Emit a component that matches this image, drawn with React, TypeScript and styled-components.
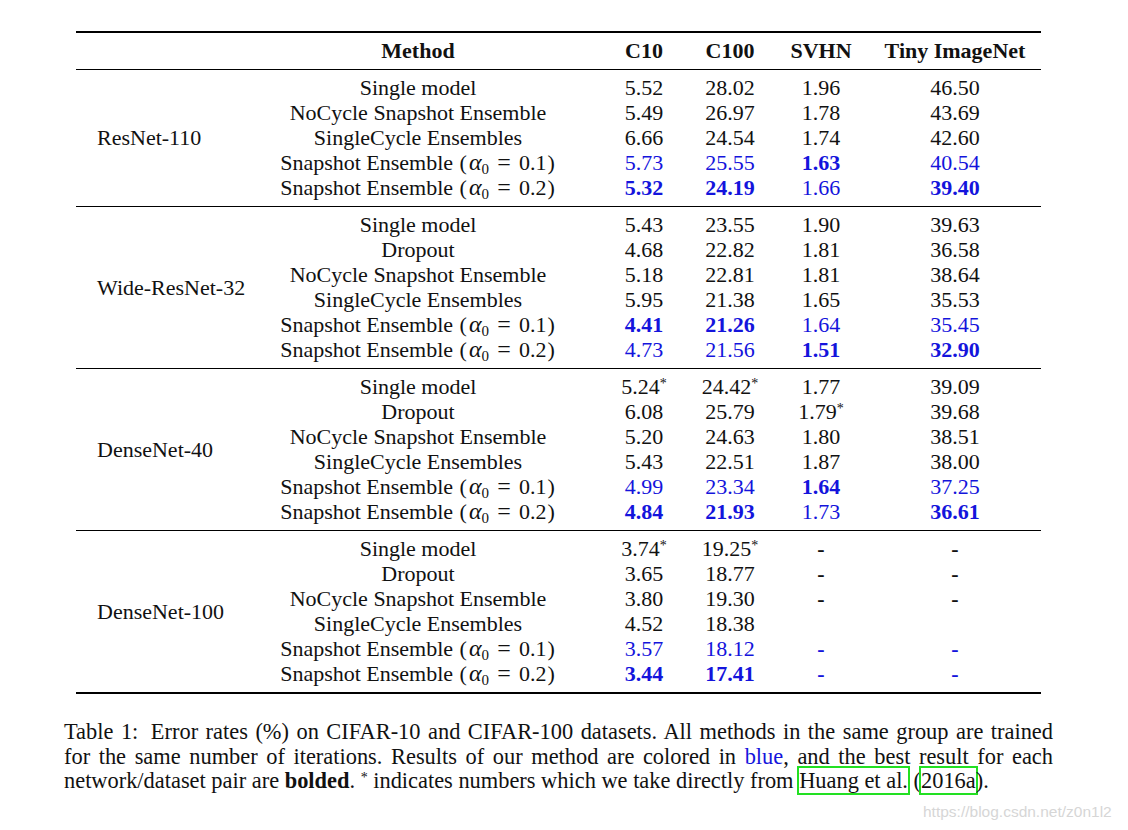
import React from 'react';
import styled, { createGlobalStyle } from 'styled-components';

const GlobalStyle = createGlobalStyle`
  html, body { margin: 0; padding: 0; background: #fff; }
  body {
    font-family: "Liberation Serif", "Times New Roman", serif;
    color: #111;
  }
`;

const Page = styled.div`
  position: relative;
  width: 1128px;
  height: 830px;
  padding-top: 31px;
  box-sizing: border-box;
  overflow: hidden;
`;

const Table = styled.div`
  margin-left: 76px;
  width: 965px;
  border-top: 2px solid #000;
  border-bottom: 2px solid #000;
  font-size: 22px;
  line-height: 25px;
`;

const Section = styled.div<{ $last?: boolean }>`
  display: flex;
  padding: 5px 0 6px;
  border-bottom: ${(p) => (p.$last ? 'none' : '1px solid #000')};
`;

const NetName = styled.div`
  width: 186px;
  flex-shrink: 0;
  box-sizing: border-box;
  padding-left: 21px;
  display: flex;
  align-items: center;
  white-space: nowrap;
`;

const RowList = styled.div`
  display: flex;
  flex-direction: column;
  flex: 1;
`;

const Row = styled.div`
  display: grid;
  grid-template-columns: 339px 86px 86px 96px 172px;
  height: 25px;
`;

const Cell = styled.div<{ $blue?: boolean; $bold?: boolean }>`
  text-align: center;
  white-space: nowrap;
  color: ${(p) => (p.$blue ? '#1414dc' : '#111')};
  font-weight: ${(p) => (p.$bold ? 700 : 400)};
`;

const MethodCell = styled(Cell)`
  padding-right: 27px;
`;

const Star = styled.sup`
  font-size: 14px;
  line-height: 0;
  vertical-align: 6px;
  font-weight: 400;
`;

const Alpha = styled.i`
  font-style: italic;
  font-size: 24px;
  margin-left: 1px;
`;

const Sub = styled.sub`
  font-size: 15px;
  line-height: 0;
  vertical-align: -4px;
`;

const Eq = styled.span`
  display: inline-block;
  width: 30px;
  text-align: center;
  font-size: 24px;
`;

const Paren = styled.span`
  display: inline-block;
  margin: 0 1px;
`;

const Caption = styled.div`
  margin: 26px 0 0 64px;
  width: 989px;
  font-size: 22.4px;
  line-height: 24.7px;
  color: #111;
`;

const CaptionLine = styled.span<{ $justify?: boolean }>`
  display: block;
  text-align: ${(p) => (p.$justify ? 'justify' : 'left')};
  text-align-last: ${(p) => (p.$justify ? 'justify' : 'left')};
`;

const Lead = styled.span`
  margin-right: 5px;
`;

const Blue = styled.span`
  color: #1414dc;
`;

const LinkBox = styled.span`
  border: 2px solid #22e022;
  margin: 0 -2px;
`;

const Watermark = styled.div`
  position: absolute;
  left: 923px;
  top: 803px;
  font-family: "Liberation Sans", Arial, sans-serif;
  font-size: 15.5px;
  color: #d6d6d6;
  white-space: nowrap;
`;

type RowData = { m: string; alpha?: string; vals: string[] };
type Group = { net: string; rows: RowData[] };

const groups: Group[] = [
  {
    net: 'ResNet-110',
    rows: [
      { m: 'Single model', vals: ['5.52', '28.02', '1.96', '46.50'] },
      { m: 'NoCycle Snapshot Ensemble', vals: ['5.49', '26.97', '1.78', '43.69'] },
      { m: 'SingleCycle Ensembles', vals: ['6.66', '24.54', '1.74', '42.60'] },
      { m: 'Snapshot Ensemble', alpha: '0.1', vals: ['5.73', '25.55', '**1.63', '40.54'] },
      { m: 'Snapshot Ensemble', alpha: '0.2', vals: ['**5.32', '**24.19', '1.66', '**39.40'] },
    ],
  },
  {
    net: 'Wide-ResNet-32',
    rows: [
      { m: 'Single model', vals: ['5.43', '23.55', '1.90', '39.63'] },
      { m: 'Dropout', vals: ['4.68', '22.82', '1.81', '36.58'] },
      { m: 'NoCycle Snapshot Ensemble', vals: ['5.18', '22.81', '1.81', '38.64'] },
      { m: 'SingleCycle Ensembles', vals: ['5.95', '21.38', '1.65', '35.53'] },
      { m: 'Snapshot Ensemble', alpha: '0.1', vals: ['**4.41', '**21.26', '1.64', '35.45'] },
      { m: 'Snapshot Ensemble', alpha: '0.2', vals: ['4.73', '21.56', '**1.51', '**32.90'] },
    ],
  },
  {
    net: 'DenseNet-40',
    rows: [
      { m: 'Single model', vals: ['5.24*', '24.42*', '1.77', '39.09'] },
      { m: 'Dropout', vals: ['6.08', '25.79', '1.79*', '39.68'] },
      { m: 'NoCycle Snapshot Ensemble', vals: ['5.20', '24.63', '1.80', '38.51'] },
      { m: 'SingleCycle Ensembles', vals: ['5.43', '22.51', '1.87', '38.00'] },
      { m: 'Snapshot Ensemble', alpha: '0.1', vals: ['4.99', '23.34', '**1.64', '37.25'] },
      { m: 'Snapshot Ensemble', alpha: '0.2', vals: ['**4.84', '**21.93', '1.73', '**36.61'] },
    ],
  },
  {
    net: 'DenseNet-100',
    rows: [
      { m: 'Single model', vals: ['3.74*', '19.25*', '-', '-'] },
      { m: 'Dropout', vals: ['3.65', '18.77', '-', '-'] },
      { m: 'NoCycle Snapshot Ensemble', vals: ['3.80', '19.30', '-', '-'] },
      { m: 'SingleCycle Ensembles', vals: ['4.52', '18.38', '', ''] },
      { m: 'Snapshot Ensemble', alpha: '0.1', vals: ['3.57', '18.12', '-', '-'] },
      { m: 'Snapshot Ensemble', alpha: '0.2', vals: ['**3.44', '**17.41', '-', '-'] },
    ],
  },
];

const headers = ['C10', 'C100', 'SVHN', 'Tiny ImageNet'];

function ValueCell({ raw, blue }: { raw: string; blue: boolean }) {
  let v = raw;
  const bold = v.startsWith('**');
  if (bold) v = v.slice(2);
  const star = v.endsWith('*');
  if (star) v = v.slice(0, -1);
  return (
    <Cell $blue={blue} $bold={bold || v === '-'}>
      {v}
      {star && <Star>*</Star>}
    </Cell>
  );
}

export default function App() {
  return (
    <>
      <GlobalStyle />
      <Page>
        <Table>
          <Section>
            <NetName />
            <RowList>
              <Row>
                <MethodCell $bold>Method</MethodCell>
                {headers.map((h) => (
                  <Cell key={h} $bold>
                    {h}
                  </Cell>
                ))}
              </Row>
            </RowList>
          </Section>
          {groups.map((g, gi) => (
            <Section key={g.net} $last={gi === groups.length - 1}>
              <NetName>{g.net}</NetName>
              <RowList>
                {g.rows.map((r, ri) => {
                  const blue = !!r.alpha;
                  return (
                    <Row key={ri}>
                      <MethodCell>
                        {r.m}
                        {r.alpha && (
                          <>
                            {' '}
                            <Paren>(</Paren>
                            <Alpha>α</Alpha>
                            <Sub>0</Sub>
                            <Eq>=</Eq>
                            {r.alpha}
                            <Paren>)</Paren>
                          </>
                        )}
                      </MethodCell>
                      {r.vals.map((v, vi) => (
                        <ValueCell key={vi} raw={v} blue={blue} />
                      ))}
                    </Row>
                  );
                })}
              </RowList>
            </Section>
          ))}
        </Table>
        <Caption>
          <CaptionLine $justify>
            <Lead>Table 1:</Lead> Error rates (%) on CIFAR-10 and CIFAR-100 datasets. All methods in the same group are
            trained
          </CaptionLine>
          <CaptionLine $justify>
            for the same number of iterations. Results of our method are colored in <Blue>blue</Blue>, and the best
            result for each
          </CaptionLine>
          <CaptionLine>
            network/dataset pair are <b>bolded</b>. <Star>*</Star> indicates numbers which we take directly from{' '}
            <LinkBox>Huang et al.</LinkBox> (<LinkBox>2016a</LinkBox>).
          </CaptionLine>
        </Caption>
        <Watermark>https://blog.csdn.net/z0n1l2</Watermark>
      </Page>
    </>
  );
}
